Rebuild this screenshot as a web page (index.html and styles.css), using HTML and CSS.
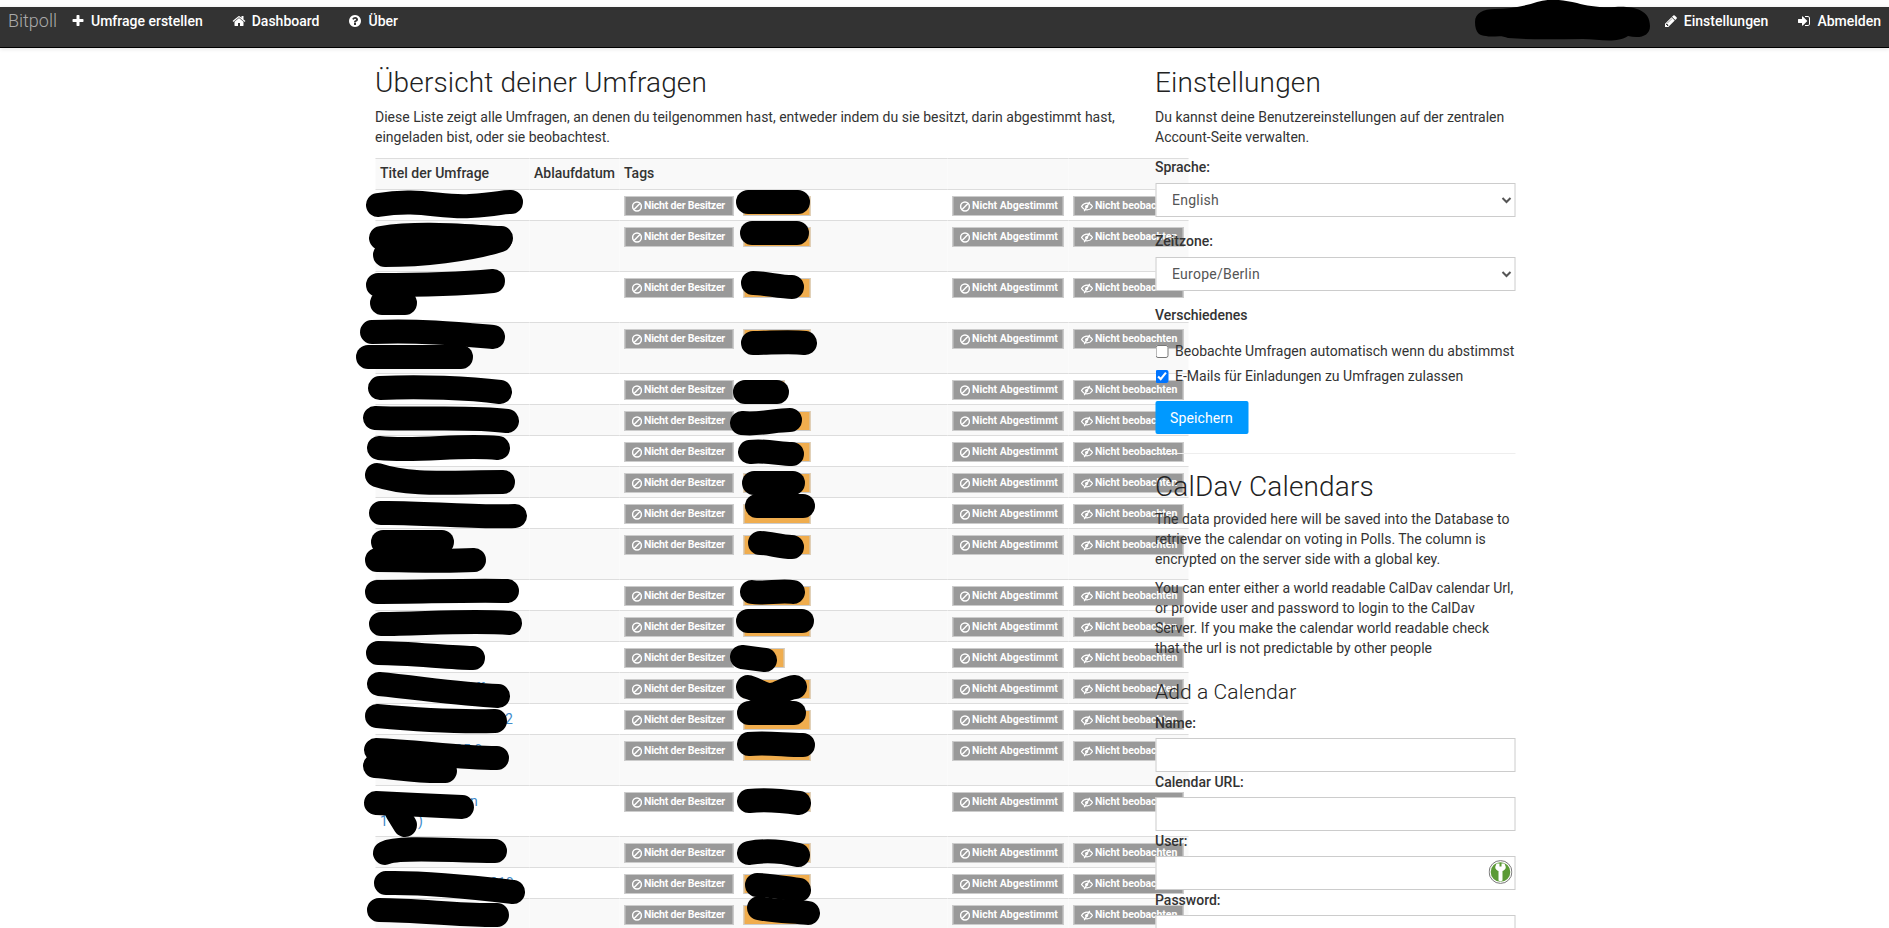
FILE: index.html
```html
<!DOCTYPE html>
<html lang="de">
<head>
<meta charset="utf-8">
<title>Bitpoll</title>
<link rel="stylesheet" href="styles.css">
</head>
<body>
<svg class="sprites" width="0" height="0" aria-hidden="true">
  <symbol id="i-plus" viewBox="0 0 1792 1792"><path d="M1600 736v192q0 40-28 68t-68 28h-416v416q0 40-28 68t-68 28h-192q-40 0-68-28t-28-68v-416h-416q-40 0-68-28t-28-68v-192q0-40 28-68t68-28h416v-416q0-40 28-68t68-28h192q40 0 68 28t28 68v416h416q40 0 68 28t28 68z"/></symbol>
  <symbol id="i-home" viewBox="0 0 1792 1792"><path d="M1472 992v480q0 26-19 45t-45 19h-384v-384h-256v384h-384q-26 0-45-19t-19-45v-480q0-1 .5-3t.5-3l575-474 575 474q1 2 1 6zm223-69l-62 74q-8 9-21 11h-3q-13 0-21-7l-692-577-692 577q-12 8-24 7-13-2-21-11l-62-74q-8-10-7-23.500t11-21.500l719-599q32-26 76-26t76 26l244 204v-195q0-14 9-23t23-9h192q14 0 23 9t9 23v408l219 182q10 8 11 21.500t-7 23.500z"/></symbol>
  <symbol id="i-help" viewBox="0 0 1792 1792"><path d="M1024 1376v-192q0-14-9-23t-23-9h-192q-14 0-23 9t-9 23v192q0 14 9 23t23 9h192q14 0 23-9t9-23zm256-672q0-88-55.500-163t-138.500-116-170-41q-243 0-371 213-15 24 8 42l132 100q7 6 19 6 16 0 25-12 53-68 86-92 34-24 86-24 48 0 85.500 26t37.500 59q0 38-20 61t-68 45q-63 28-115.500 86.500t-52.500 125.500v36q0 14 9 23t23 9h192q14 0 23-9t9-23q0-19 21.500-49.500t54.500-49.500q32-18 49-28.500t46-35 44.500-48 28-60.500 12.500-81zm384 192q0 209-103 385.500t-279.500 279.500-385.500 103-385.500-103-279.500-279.500-103-385.500 103-385.500 279.500-279.500 385.500-103 385.500 103 279.500 279.500 103 385.500z"/></symbol>
  <symbol id="i-pencil" viewBox="0 0 1792 1792"><path d="M491 1536l91-91-235-235-91 91v107h128v128h107zm523-928q0-22-22-22-10 0-17 7l-542 542q-7 7-7 17 0 22 22 22 10 0 17-7l542-542q7-7 7-17zm-54-192l416 416-832 832h-416v-416zm683 96q0 53-37 90l-166 166-416-416 166-165q36-38 90-38 53 0 91 38l235 234q37 39 37 91z"/></symbol>
  <symbol id="i-signin" viewBox="0 0 1792 1792"><path d="M1312 896q0 26-19 45l-544 544q-19 19-45 19t-45-19-19-45v-288h-448q-26 0-45-19t-19-45v-384q0-26 19-45t45-19h448v-288q0-26 19-45t45-19 45 19l544 544q19 19 19 45zm352-352v704q0 119-84.500 203.500t-203.500 84.500h-320q-13 0-22.500-9.500t-9.500-22.500q0-4-1-20t-.5-26.500 3-23.500 10-19.500 20.500-6.500h320q66 0 113-47t47-113v-704q0-66-47-113t-113-47h-312l-11.500-1-11.500-3-8-5.500-7-9-2-13.500q0-4-1-20t-.5-26.500 3-23.500 10-19.500 20.500-6.500h320q119 0 203.500 84.500t84.500 203.500z"/></symbol>
  <symbol id="i-ban" viewBox="0 0 12 12"><circle cx="6" cy="6" r="4.800" fill="none" stroke="currentColor" stroke-width="1.600"/><path d="M2.800 9.200 9.200 2.800" stroke="currentColor" stroke-width="1.600"/></symbol>
  <symbol id="i-eyeoff" viewBox="0 0 14 12"><path d="M1 6c1.400-2.300 3.400-3.600 6-3.600S11.600 3.700 13 6c-1.400 2.300-3.400 3.600-6 3.600S2.400 8.300 1 6z" fill="none" stroke="currentColor" stroke-width="1.300"/><circle cx="6.600" cy="6" r="1.700" fill="currentColor"/><path d="M4 11 10 1" stroke="currentColor" stroke-width="1.500"/></symbol>
</svg>

<nav class="navbar">
  <span class="brand">Bitpoll</span>
  <a class="nav-item"><svg class="nav-icon"><use href="#i-plus"/></svg>Umfrage erstellen</a>
  <a class="nav-item"><svg class="nav-icon"><use href="#i-home"/></svg>Dashboard</a>
  <a class="nav-item"><svg class="nav-icon"><use href="#i-help"/></svg>Über</a>
  <span class="nav-spacer"></span>
  <a class="nav-item"><svg class="nav-icon"><use href="#i-pencil"/></svg>Einstellungen</a>
  <a class="nav-item"><svg class="nav-icon"><use href="#i-signin"/></svg>Abmelden</a>
</nav>

<main class="container">
  <section class="col-main">
    <h2 class="title">Übersicht deiner Umfragen</h2>
    <p class="intro">Diese Liste zeigt alle Umfragen, an denen du teilgenommen hast, entweder indem du sie besitzt, darin abgestimmt hast, eingeladen bist, oder sie beobachtest.</p>
    <table class="polls">
      <colgroup><col class="c-title"><col class="c-date"><col class="c-tags"><col class="c-voted"><col class="c-watch"></colgroup>
      <thead><tr><th>Titel der Umfrage</th><th>Ablaufdatum</th><th>Tags</th><th></th><th></th></tr></thead>
      <tbody>
        <tr><td></td><td></td><td><div class="tags"><span class="label"><svg class="l-icon"><use href="#i-ban"/></svg>Nicht der Besitzer</span><span class="tag"></span></div></td><td><span class="label"><svg class="l-icon"><use href="#i-ban"/></svg>Nicht Abgestimmt</span></td><td><span class="label"><svg class="l-icon l-eye"><use href="#i-eyeoff"/></svg>Nicht beobachten</span></td></tr>
        <tr><td><br>&nbsp;</td><td></td><td><div class="tags"><span class="label"><svg class="l-icon"><use href="#i-ban"/></svg>Nicht der Besitzer</span><span class="tag"></span></div></td><td><span class="label"><svg class="l-icon"><use href="#i-ban"/></svg>Nicht Abgestimmt</span></td><td><span class="label"><svg class="l-icon l-eye"><use href="#i-eyeoff"/></svg>Nicht beobachten</span></td></tr>
        <tr><td><br>&nbsp;</td><td></td><td><div class="tags"><span class="label"><svg class="l-icon"><use href="#i-ban"/></svg>Nicht der Besitzer</span><span class="tag"></span></div></td><td><span class="label"><svg class="l-icon"><use href="#i-ban"/></svg>Nicht Abgestimmt</span></td><td><span class="label"><svg class="l-icon l-eye"><use href="#i-eyeoff"/></svg>Nicht beobachten</span></td></tr>
        <tr><td><br>&nbsp;</td><td></td><td><div class="tags"><span class="label"><svg class="l-icon"><use href="#i-ban"/></svg>Nicht der Besitzer</span><span class="tag"></span></div></td><td><span class="label"><svg class="l-icon"><use href="#i-ban"/></svg>Nicht Abgestimmt</span></td><td><span class="label"><svg class="l-icon l-eye"><use href="#i-eyeoff"/></svg>Nicht beobachten</span></td></tr>
        <tr><td></td><td></td><td><div class="tags"><span class="label"><svg class="l-icon"><use href="#i-ban"/></svg>Nicht der Besitzer</span><span class="tag tag-short"></span></div></td><td><span class="label"><svg class="l-icon"><use href="#i-ban"/></svg>Nicht Abgestimmt</span></td><td><span class="label"><svg class="l-icon l-eye"><use href="#i-eyeoff"/></svg>Nicht beobachten</span></td></tr>
        <tr><td></td><td></td><td><div class="tags"><span class="label"><svg class="l-icon"><use href="#i-ban"/></svg>Nicht der Besitzer</span><span class="tag"></span></div></td><td><span class="label"><svg class="l-icon"><use href="#i-ban"/></svg>Nicht Abgestimmt</span></td><td><span class="label"><svg class="l-icon l-eye"><use href="#i-eyeoff"/></svg>Nicht beobachten</span></td></tr>
        <tr><td></td><td></td><td><div class="tags"><span class="label"><svg class="l-icon"><use href="#i-ban"/></svg>Nicht der Besitzer</span><span class="tag"></span></div></td><td><span class="label"><svg class="l-icon"><use href="#i-ban"/></svg>Nicht Abgestimmt</span></td><td><span class="label"><svg class="l-icon l-eye"><use href="#i-eyeoff"/></svg>Nicht beobachten</span></td></tr>
        <tr><td></td><td></td><td><div class="tags"><span class="label"><svg class="l-icon"><use href="#i-ban"/></svg>Nicht der Besitzer</span><span class="tag"></span></div></td><td><span class="label"><svg class="l-icon"><use href="#i-ban"/></svg>Nicht Abgestimmt</span></td><td><span class="label"><svg class="l-icon l-eye"><use href="#i-eyeoff"/></svg>Nicht beobachten</span></td></tr>
        <tr><td></td><td></td><td><div class="tags"><span class="label"><svg class="l-icon"><use href="#i-ban"/></svg>Nicht der Besitzer</span><span class="tag"></span></div></td><td><span class="label"><svg class="l-icon"><use href="#i-ban"/></svg>Nicht Abgestimmt</span></td><td><span class="label"><svg class="l-icon l-eye"><use href="#i-eyeoff"/></svg>Nicht beobachten</span></td></tr>
        <tr><td><br>&nbsp;</td><td></td><td><div class="tags"><span class="label"><svg class="l-icon"><use href="#i-ban"/></svg>Nicht der Besitzer</span><span class="tag"></span></div></td><td><span class="label"><svg class="l-icon"><use href="#i-ban"/></svg>Nicht Abgestimmt</span></td><td><span class="label"><svg class="l-icon l-eye"><use href="#i-eyeoff"/></svg>Nicht beobachten</span></td></tr>
        <tr><td></td><td></td><td><div class="tags"><span class="label"><svg class="l-icon"><use href="#i-ban"/></svg>Nicht der Besitzer</span><span class="tag"></span></div></td><td><span class="label"><svg class="l-icon"><use href="#i-ban"/></svg>Nicht Abgestimmt</span></td><td><span class="label"><svg class="l-icon l-eye"><use href="#i-eyeoff"/></svg>Nicht beobachten</span></td></tr>
        <tr><td></td><td></td><td><div class="tags"><span class="label"><svg class="l-icon"><use href="#i-ban"/></svg>Nicht der Besitzer</span><span class="tag"></span></div></td><td><span class="label"><svg class="l-icon"><use href="#i-ban"/></svg>Nicht Abgestimmt</span></td><td><span class="label"><svg class="l-icon l-eye"><use href="#i-eyeoff"/></svg>Nicht beobachten</span></td></tr>
        <tr><td></td><td></td><td><div class="tags"><span class="label"><svg class="l-icon"><use href="#i-ban"/></svg>Nicht der Besitzer</span><span class="tag tag-short"></span></div></td><td><span class="label"><svg class="l-icon"><use href="#i-ban"/></svg>Nicht Abgestimmt</span></td><td><span class="label"><svg class="l-icon l-eye"><use href="#i-eyeoff"/></svg>Nicht beobachten</span></td></tr>
        <tr><td><a class="poll-link"><span class="gap gap-95"></span>ff</a></td><td></td><td><div class="tags"><span class="label"><svg class="l-icon"><use href="#i-ban"/></svg>Nicht der Besitzer</span><span class="tag"></span></div></td><td><span class="label"><svg class="l-icon"><use href="#i-ban"/></svg>Nicht Abgestimmt</span></td><td><span class="label"><svg class="l-icon l-eye"><use href="#i-eyeoff"/></svg>Nicht beobachten</span></td></tr>
        <tr><td><a class="poll-link"><span class="gap gap-125"></span>2</a></td><td></td><td><div class="tags"><span class="label"><svg class="l-icon"><use href="#i-ban"/></svg>Nicht der Besitzer</span><span class="tag"></span></div></td><td><span class="label"><svg class="l-icon"><use href="#i-ban"/></svg>Nicht Abgestimmt</span></td><td><span class="label"><svg class="l-icon l-eye"><use href="#i-eyeoff"/></svg>Nicht beobachten</span></td></tr>
        <tr><td><a class="poll-link"><span class="gap gap-75"></span>05 0</a><br>&nbsp;</td><td></td><td><div class="tags"><span class="label"><svg class="l-icon"><use href="#i-ban"/></svg>Nicht der Besitzer</span><span class="tag"></span></div></td><td><span class="label"><svg class="l-icon"><use href="#i-ban"/></svg>Nicht Abgestimmt</span></td><td><span class="label"><svg class="l-icon l-eye"><use href="#i-eyeoff"/></svg>Nicht beobachten</span></td></tr>
        <tr><td><a class="poll-link"><span class="gap gap-90"></span>n<br>1<span class="gap gap-30"></span>)</a></td><td></td><td><div class="tags"><span class="label"><svg class="l-icon"><use href="#i-ban"/></svg>Nicht der Besitzer</span><span class="tag"></span></div></td><td><span class="label"><svg class="l-icon"><use href="#i-ban"/></svg>Nicht Abgestimmt</span></td><td><span class="label"><svg class="l-icon l-eye"><use href="#i-eyeoff"/></svg>Nicht beobachten</span></td></tr>
        <tr><td></td><td></td><td><div class="tags"><span class="label"><svg class="l-icon"><use href="#i-ban"/></svg>Nicht der Besitzer</span><span class="tag"></span></div></td><td><span class="label"><svg class="l-icon"><use href="#i-ban"/></svg>Nicht Abgestimmt</span></td><td><span class="label"><svg class="l-icon l-eye"><use href="#i-eyeoff"/></svg>Nicht beobachten</span></td></tr>
        <tr><td><a class="poll-link"><span class="gap gap-110"></span>010</a></td><td></td><td><div class="tags"><span class="label"><svg class="l-icon"><use href="#i-ban"/></svg>Nicht der Besitzer</span><span class="tag"></span></div></td><td><span class="label"><svg class="l-icon"><use href="#i-ban"/></svg>Nicht Abgestimmt</span></td><td><span class="label"><svg class="l-icon l-eye"><use href="#i-eyeoff"/></svg>Nicht beobachten</span></td></tr>
        <tr><td></td><td></td><td><div class="tags"><span class="label"><svg class="l-icon"><use href="#i-ban"/></svg>Nicht der Besitzer</span><span class="tag"></span></div></td><td><span class="label"><svg class="l-icon"><use href="#i-ban"/></svg>Nicht Abgestimmt</span></td><td><span class="label"><svg class="l-icon l-eye"><use href="#i-eyeoff"/></svg>Nicht beobachten</span></td></tr>
      </tbody>
    </table>
  </section>

  <aside class="col-side">
    <h2 class="title">Einstellungen</h2>
    <p class="intro intro-side">Du kannst deine Benutzereinstellungen auf der zentralen Account-Seite verwalten.</p>
    <div class="group">
      <label class="field-label">Sprache:</label>
      <select class="control"><option>English</option></select>
    </div>
    <div class="group">
      <label class="field-label">Zeitzone:</label>
      <select class="control"><option>Europe/Berlin</option></select>
    </div>
    <div class="field-label misc">Verschiedenes</div>
    <label class="check"><input type="checkbox">Beobachte Umfragen automatisch wenn du abstimmst</label>
    <label class="check"><input type="checkbox" checked>E-Mails für Einladungen zu Umfragen zulassen</label>
    <button class="btn" type="button">Speichern</button>
    <hr class="rule">
    <h2 class="title">CalDav Calendars</h2>
    <p class="cal-text">The data provided here will be saved into the Database to retrieve the calendar on voting in Polls. The column is encrypted on the server side with a global key.</p>
    <p class="cal-text cal-text-2">You can enter either a world readable CalDav calendar Url, or provide user and password to login to the CalDav Server. If you make the calendar world readable check that the url is not predictable by other people</p>
    <h3 class="subtitle">Add a Calendar</h3>
    <label class="field-label tight">Name:</label>
    <input class="control" type="text">
    <label class="field-label tight">Calendar URL:</label>
    <input class="control" type="text">
    <label class="field-label tight">User:</label>
    <div class="with-key">
      <input class="control" type="text">
      <svg class="key" viewBox="0 0 24 24" aria-hidden="true">
        <circle cx="12" cy="12" r="11.400" fill="#fff" stroke="#777" stroke-width="1"/>
        <circle cx="12" cy="12" r="9.800" fill="#5b9a35"/>
        <path d="M8 3.500h8l1.300 3.500c0 2-1.600 3.400-3.300 4v9.500l-2 1-2-1v-9.500C8.300 10.400 6.700 9 6.700 7z" fill="#fff"/>
        <path d="M11 3h2v3.500h-2z" fill="#5b9a35"/>
      </svg>
    </div>
    <label class="field-label tight">Password:</label>
    <input class="control" type="password">
  </aside>
</main>

<svg class="redactions" viewBox="0 0 1889 928" aria-hidden="true">
  <path class="blot" d="M1475 22c0-9 8-13 20-13 15 0 30-3 42-7 14-4 26-2 40 1 10 3 25 5 38 4 15-1 35 1 35 19 0 10-10 13-22 10-12 8-30 3-45 3-25 0-50 1-75-1-8-4-15 0-22-2-6 0-11-3-11-14z"/>
  <g class="strokes">
    <path d="M378 205C420 198 440 208 470 206S500 202 511 202"/>
    <path d="M381 238C420 232 460 236 501 238"/>
    <path d="M385 255C420 255 470 250 500 240"/>
    <path d="M378 285C420 285 460 284 493 281"/>
    <path d="M382 303H405"/>
    <path d="M372 332C420 330 460 334 493 337"/>
    <path d="M368 357H461"/>
    <path d="M380 388C420 386 470 388 500 392"/>
    <path d="M375 418C420 420 470 416 507 421"/>
    <path d="M379 448C420 452 460 444 498 448"/>
    <path d="M377 475C410 486 450 482 503 482"/>
    <path d="M381 513C420 512 470 518 515 516"/>
    <path d="M383 542H442"/>
    <path d="M377 560C410 560 440 562 474 560"/>
    <path d="M377 592C420 592 470 590 507 591"/>
    <path d="M381 624C420 624 470 620 510 623"/>
    <path d="M378 653C410 653 450 658 473 658"/>
    <path d="M379 684C420 688 460 694 498 696"/>
    <path d="M377 716C420 720 460 722 495 721"/>
    <path d="M376 750C420 752 460 758 497 758"/>
    <path d="M375 766C400 768 420 772 445 771"/>
    <path d="M376 803C400 804 440 806 462 807"/>
    <path d="M397 812 405 825"/>
    <path d="M385 853C400 846 450 851 495 851"/>
    <path d="M386 883C430 882 480 888 513 892"/>
    <path d="M379 910C420 910 460 916 497 915"/>
    <path d="M748 202H798"/>
    <path d="M752 233H797"/>
    <path d="M753 283C765 283 780 287 792 287"/>
    <path d="M753 343C770 343 790 341 805 343"/>
    <path d="M745 392H777"/>
    <path d="M742 423C760 425 775 420 790 420"/>
    <path d="M750 452C765 450 780 454 792 454"/>
    <path d="M754 483H793"/>
    <path d="M757 506H803"/>
    <path d="M760 543C770 543 780 547 792 547"/>
    <path d="M752 592C765 594 780 590 793 592"/>
    <path d="M748 621H802"/>
    <path d="M742 657 765 660"/>
    <path d="M748 687C758 690 762 695 770 695S785 688 795 687"/>
    <path d="M749 713H794"/>
    <path d="M749 744C765 742 785 745 803 745"/>
    <path d="M749 801C765 799 785 801 799 803"/>
    <path d="M749 853C765 850 785 852 798 855"/>
    <path d="M757 885C770 885 785 888 799 890"/>
    <path d="M759 908C775 912 795 911 808 913"/>
  </g>
</svg>
</body>
</html>
```

FILE: styles.css
```css
* { box-sizing: border-box; }
html, body { margin: 0; height: 928px; overflow: hidden; background: #fff; }
body {
  position: relative;
  font-family: Roboto, "Liberation Sans", sans-serif;
  font-size: 14px;
  line-height: 20px;
  color: #333;
}
.sprites { display: block; height: 0; width: 0; }

.navbar {
  display: flex;
  align-items: flex-start;
  margin-top: 7px;
  height: 41px;
  padding: 4px 8px 0 8px;
  background: #333;
  border-bottom: 1px solid #000;
  box-shadow: 0 1px 4px rgba(0, 0, 0, .12);
  color: #fff;
}
.brand { flex: none; width: 63px; font-size: 18px; font-weight: 300; color: #aaa; }
.nav-item { display: flex; align-items: center; font-weight: 500; font-size: 14px; margin-right: 29px; }
.nav-item:last-child { margin-right: 0; }
.nav-spacer { flex: 1; }
.nav-icon { flex: none; width: 14px; height: 14px; margin-right: 6px; fill: #fff; }

.container { display: flex; width: 1140px; margin: 18px auto 0; gap: 30px; transform: translateX(.5px); }
.col-main { width: 750px; flex: none; }
.col-side { width: 360px; flex: none; }

.title { margin: 0; font-size: 28px; line-height: 33px; font-weight: 300; letter-spacing: .15px; color: #222; }
.intro { margin: 8px 0 11px; }
.intro-side { margin-bottom: 10px; }

.polls { width: 813px; table-layout: fixed; border-collapse: separate; border-spacing: 0; }
.c-title { width: 154px; }
.c-date { width: 90px; }
.c-tags { width: 328px; }
.c-voted { width: 121px; }
.c-watch { width: 120px; }
.polls th, .polls td { padding: 5px; border-top: 1px solid #ddd; text-align: left; vertical-align: top; }
.polls th { padding-top: 4px; padding-bottom: 6px; font-weight: 500; background: #f9f9f9; }
.polls th:first-child { white-space: nowrap; }
.polls tbody tr:nth-child(even) td { background: #f9f9f9; }
.polls td { height: 31px; }
.polls td:nth-child(n+3) { padding-top: 6px; padding-bottom: 4px; }

.poll-link { color: #428bca; }
.gap { display: inline-block; }
.gap-30 { width: 30px; }
.gap-75 { width: 75px; }
.gap-90 { width: 90px; }
.gap-95 { width: 95px; }
.gap-110 { width: 110px; }
.gap-125 { width: 125px; }

.tags { display: flex; gap: 10px; }
.label {
  display: flex;
  align-items: center;
  width: 110px;
  height: 20px;
  padding: 0 6px;
  overflow: hidden;
  background: #999;
  border: 1px solid #ccc;
  color: #fff;
  font-size: 10.5px;
  font-weight: 700;
  white-space: nowrap;
}
.tags .label { flex: none; width: 109px; letter-spacing: -.2px; }
.polls td:nth-child(4) .label { width: 111px; }
.polls td:nth-child(5) .label { letter-spacing: -.06px; }
.l-icon { width: 11px; height: 11px; margin-right: 2px; flex: none; }
.l-eye { width: 13px; }
.tag { display: block; width: 67px; height: 20px; background: #f0ad4e; border: 1px solid #ccc; }
.tag-short { width: 41px; }

.group { margin-bottom: 14px; }
.field-label { display: block; font-weight: 500; margin-bottom: 6px; }
.field-label.tight { margin-bottom: 5px; }
.misc { margin-bottom: 16px; }
.control {
  display: block;
  width: 100%;
  height: 34px;
  padding: 6px 12px;
  background: #fff;
  border: 1px solid #ccc;
  color: #555;
  font: 14px/20px Roboto, "Liberation Sans", sans-serif;
  letter-spacing: .25px;
}
.check { display: flex; align-items: center; height: 20px; margin-bottom: 5px; white-space: nowrap; }
.check input { width: 13px; height: 13px; margin: 0 7px 0 0; flex: none; }
.btn {
  display: block;
  width: 93px;
  height: 33px;
  margin-top: 15px;
  padding: 0;
  border: 0;
  border-radius: 2px;
  background: #0099ff;
  color: #fff;
  font: 14px Roboto, "Liberation Sans", sans-serif;
  letter-spacing: .1px;
}
.rule { margin: 19px 0 16px; border: 0; border-top: 1px solid #eee; }
.cal-text { margin: 6px 0 9px; }
.cal-text-2 { margin: 0; }
.subtitle { margin: 21px 0 8px; font-size: 21px; line-height: 26px; font-weight: 300; letter-spacing: .1px; color: #222; }
.with-key { position: relative; }
.key { position: absolute; top: 4px; right: 3px; width: 24px; height: 24px; }

.redactions { position: absolute; inset: 0; width: 1889px; height: 928px; pointer-events: none; }
.blot { fill: #000; }
.strokes path { fill: none; stroke: #000; stroke-width: 24px; stroke-linecap: round; stroke-linejoin: round; }
```
